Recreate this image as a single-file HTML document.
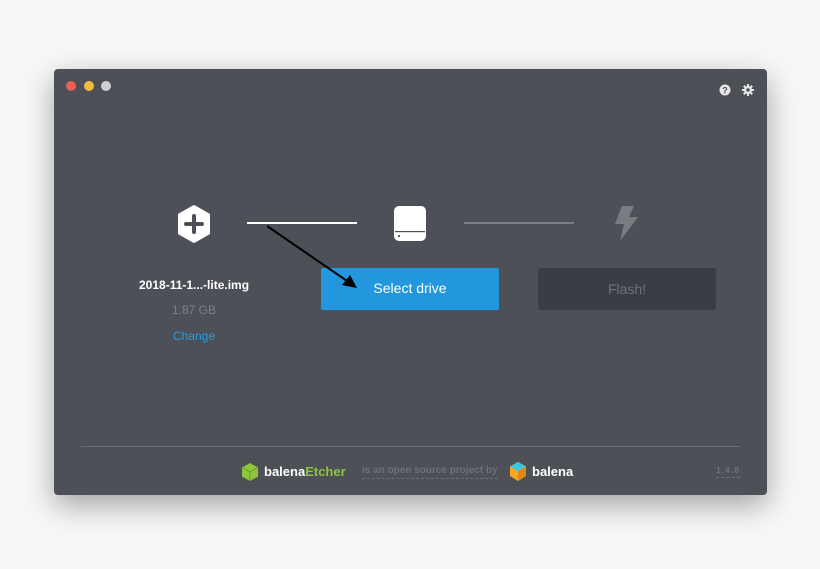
<!DOCTYPE html>
<html><head><meta charset="utf-8"><style>
html,body{margin:0;padding:0;width:820px;height:569px;background:#f7f7f7;overflow:hidden;font-family:"Liberation Sans",sans-serif}
.win{position:absolute;left:54px;top:69px;width:713px;height:426px;background:#4d5057;border-radius:4px;box-shadow:0 10px 30px rgba(0,0,0,.35)}
.dot{position:absolute;top:12px;width:10px;height:10px;border-radius:50%}
.t{position:absolute;white-space:nowrap}
</style></head><body>
<div class="win">
<div class="dot" style="left:12px;background:#ec5f56"></div>
<div class="dot" style="left:30px;background:#f3bd3f"></div>
<div class="dot" style="left:47px;background:#cfcfcf"></div>
<svg style="position:absolute;left:665px;top:15px" width="12" height="12" viewBox="0 0 12 12"><circle cx="6" cy="6" r="5.5" fill="#e6e6e6"/><text x="6" y="9.5" font-size="9" font-weight="bold" text-anchor="middle" fill="#4d5057" font-family="Liberation Sans">?</text></svg>
<svg style="position:absolute;left:688px;top:15px" width="12" height="12" viewBox="0 0 12 12"><g fill="#e6e6e6"><circle cx="6" cy="6" r="4"/><rect x="5" y="0" width="2" height="12"/><rect x="0" y="5" width="12" height="2"/><rect x="5" y="0" width="2" height="12" transform="rotate(45 6 6)"/><rect x="5" y="0" width="2" height="12" transform="rotate(-45 6 6)"/></g><circle cx="6" cy="6" r="1.7" fill="#4d5057"/></svg>

<svg style="position:absolute;left:123px;top:136px" width="34" height="38" viewBox="0 0 34 38"><path d="M17 1 L32 9.5 V28.5 L17 37 L2 28.5 V9.5Z" fill="#fff" stroke="#fff" stroke-linejoin="round" stroke-width="2"/><path d="M17 11 V27 M9 19 H25" stroke="#4d5057" stroke-width="4" stroke-linecap="round"/></svg>
<div style="position:absolute;left:193px;top:153px;width:110px;height:2px;background:#fff"></div>
<div style="position:absolute;left:410px;top:153px;width:110px;height:2px;background:#7a7d82"></div>
<svg style="position:absolute;left:338px;top:136px" width="36" height="38" viewBox="0 0 36 38"><rect x="2" y="1" width="32" height="35" rx="5" fill="#fff"/><rect x="3" y="26" width="30" height="1.2" fill="#4d5057"/><circle cx="7" cy="31" r="1.1" fill="#4d5057"/></svg>
<svg style="position:absolute;left:558px;top:135px" width="28" height="38" viewBox="0 0 28 38"><path d="M10 2 H22 L17 13 H26 L8 37 L12 20 H3Z" fill="#7a7c81"/></svg>

<div class="t" style="left:85px;top:209px;width:110px;text-align:center;color:#fff;font-weight:bold;font-size:12px">2018-11-1...-lite.img</div>
<div class="t" style="left:85px;top:234px;width:110px;text-align:center;color:#7d8086;font-size:12px">1.87 GB</div>
<div class="t" style="left:85px;top:260px;width:110px;text-align:center;color:#2a9ae0;font-size:12px">Change</div>

<div style="position:absolute;left:267px;top:199px;width:178px;height:42px;background:#2297de;border-radius:2px;color:#fff;font-size:14px;text-align:center;line-height:41px">Select drive</div>
<div style="position:absolute;left:484px;top:199px;width:178px;height:42px;background:#3a3d43;border-radius:3px;color:#6f7278;font-size:14px;text-align:center;line-height:42px">Flash!</div>

<svg style="position:absolute;left:0;top:0" width="713" height="426"><line x1="213" y1="157" x2="296" y2="214" stroke="#000" stroke-width="2"/><path d="M303 219 L288 216 L296 206Z" fill="#000"/></svg>

<div style="position:absolute;left:27px;top:377px;width:659px;height:1px;background:#6a6d73"></div>
<svg style="position:absolute;left:187px;top:393px" width="18" height="20" viewBox="0 0 18 20"><path d="M9 1 L17 5.5 V14.5 L9 19 L1 14.5 V5.5Z" fill="#8fc43e"/><path d="M1 5.5 L9 10 L17 5.5 M9 10 V19" stroke="#6da02a" stroke-width="1" fill="none"/></svg>
<div class="t" style="left:210px;top:395px;font-size:13px;font-weight:bold;color:#fff">balena<span style="color:#8fc43e">Etcher</span></div>
<div class="t" style="left:308px;top:396px;font-size:10px;font-weight:bold;color:#6d7076;border-bottom:1px dashed #6d7076;padding-bottom:2px">is an open source project by</div>
<svg style="position:absolute;left:455px;top:392px" width="18" height="21" viewBox="0 0 18 21"><path d="M9 1 L17 5.5 V15 L9 20 L1 15 V5.5Z" fill="#f5a623"/><path d="M9 1 L17 5.5 L9 10 L1 5.5Z" fill="#3ec6e0"/><path d="M9 10 L17 5.5 V15 L9 20Z" fill="#e0891a"/></svg>
<div class="t" style="left:478px;top:395px;font-size:13px;font-weight:bold;color:#fff">balena</div>
<div class="t" style="left:662px;top:396px;font-size:8.5px;font-weight:bold;color:#6d7076;border-bottom:1px dashed #6d7076;padding-bottom:2px;letter-spacing:1px">1.4.8</div>
</div>
</body></html>
